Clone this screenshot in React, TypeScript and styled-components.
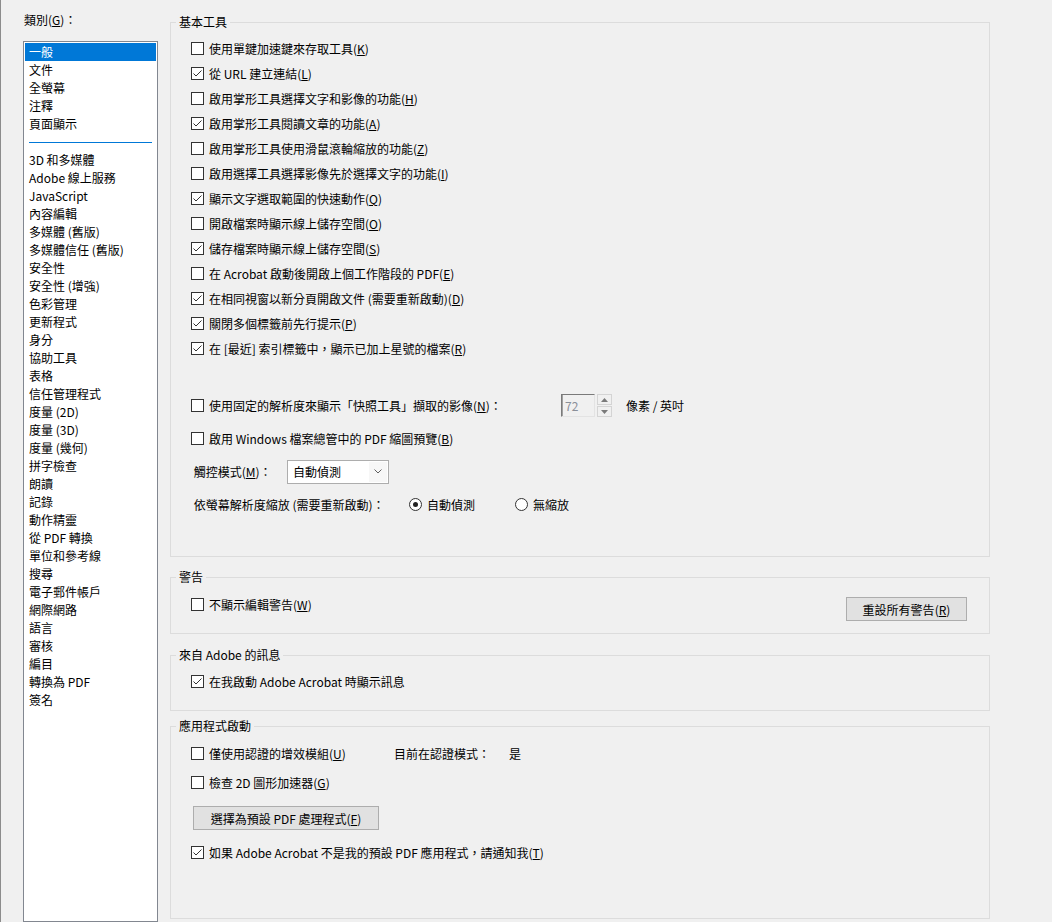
import { FC, ReactNode } from 'react';
import styled, { createGlobalStyle } from 'styled-components';

const GlobalStyle = createGlobalStyle`
  html, body {
    margin: 0;
    padding: 0;
    background: #f0f0f0;
  }
  body {
    font-family: "Noto Sans CJK TC", "Noto Sans", sans-serif;
    font-size: 12px;
    color: #000;
  }
`;

const Window = styled.div`
  display: flex;
  height: 922px;
  overflow: hidden;
  background: #f0f0f0;
  border-left: 1px solid #8c8c8c;
  box-sizing: border-box;
`;

const Sidebar = styled.div`
  display: flex;
  flex-direction: column;
  width: 169px;
  flex-shrink: 0;
  padding: 12px 0 0 22px;
  box-sizing: border-box;
`;

const SidebarLabel = styled.div`
  line-height: 16px;
  height: 16px;
  margin: 0 0 13px 1px;
`;

const CategoryList = styled.div`
  width: 135px;
  flex: 1;
  border: 1px solid #828790;
  background: #fff;
  padding: 1px;
  box-sizing: border-box;
`;

const CategoryItem = styled.div<{ $selected?: boolean }>`
  height: 18px;
  line-height: 18px;
  padding-left: 4px;
  white-space: nowrap;
  background: ${(p) => (p.$selected ? '#0078d7' : 'transparent')};
  color: ${(p) => (p.$selected ? '#fff' : '#000')};
`;

const ListDivider = styled.div`
  height: 18px;
  display: flex;
  align-items: center;
  padding: 0 4px 0 4px;
  &::after {
    content: '';
    flex: 1;
    height: 1px;
    background: #0078d7;
  }
`;

const Content = styled.div`
  width: 820px;
  display: flex;
  flex-direction: column;
`;

const Group = styled.fieldset<{ $top: number; $pad: string }>`
  margin: ${(p) => p.$top}px 0 0 0;
  padding: ${(p) => p.$pad};
  border: 1px solid #dcdcdc;
  min-inline-size: 0;
  box-sizing: border-box;
`;

const GroupTitle = styled.legend`
  line-height: 16px;
  padding: 0 3px;
  margin-left: -15px;
`;

const Row = styled.div<{ $h?: number; $mt?: number }>`
  display: flex;
  align-items: center;
  height: ${(p) => p.$h ?? 25}px;
  margin-top: ${(p) => p.$mt ?? 0}px;
  white-space: nowrap;
`;

const CheckCell = styled.div<{ $w?: number }>`
  display: flex;
  align-items: center;
  width: ${(p) => (p.$w ? `${p.$w}px` : 'auto')};
  flex-shrink: 0;
`;

const Box = styled.span`
  display: inline-flex;
  width: 13px;
  height: 13px;
  border: 1px solid #333;
  background: #fff;
  box-sizing: border-box;
  flex-shrink: 0;
`;

const CheckText = styled.span`
  margin-left: 5px;
`;

const Key = styled.u`
  text-underline-offset: 1px;
`;

const Caption = styled.span<{ $w?: number }>`
  display: inline-block;
  width: ${(p) => (p.$w ? `${p.$w}px` : 'auto')};
  flex-shrink: 0;
`;

const Mnemonic: FC<{ text: string; k: string }> = ({ text, k }) => (
  <>
    {text}(<Key>{k}</Key>)
  </>
);

const Checkbox: FC<{ checked?: boolean; children: ReactNode; width?: number }> = ({
  checked,
  children,
  width,
}) => (
  <CheckCell $w={width}>
    <Box>
      {checked && (
        <svg width="11" height="11" viewBox="0 0 11 11">
          <polyline points="1.5,5.5 4,8 9.5,2.5" fill="none" stroke="#333" strokeWidth="1" />
        </svg>
      )}
    </Box>
    <CheckText>{children}</CheckText>
  </CheckCell>
);

/* spin box for the resolution value */
const SpinField = styled.div`
  display: flex;
  align-items: center;
  gap: 2px;
`;

const SpinInput = styled.span`
  width: 34px;
  height: 23px;
  box-sizing: border-box;
  border: 1px solid;
  border-color: #7a7a7a #e3e3e3 #e3e3e3 #7a7a7a;
  box-shadow: inset 1px 0 0 #a0a0a0;
  color: #8a8f99;
  line-height: 21px;
  padding-left: 3px;
`;

const SpinButtons = styled.div`
  display: flex;
  flex-direction: column;
  width: 15px;
  height: 23px;
  gap: 1px;
`;

const SpinButton = styled.span`
  flex: 1;
  display: flex;
  align-items: center;
  justify-content: center;
  border: 1px solid #d4d4d4;
  background: #f0f0f0;
`;

const Unit = styled.span`
  margin-left: 14px;
`;

/* drop-down list */
const Combo = styled.div`
  display: flex;
  width: 102px;
  height: 24px;
  box-sizing: border-box;
  border: 1px solid #adadad;
  padding: 1px;
  background: #fff;
`;

const ComboValue = styled.span`
  flex: 1;
  line-height: 20px;
  padding-left: 4px;
`;

const ComboArrow = styled.span`
  width: 18px;
  display: flex;
  align-items: center;
  justify-content: center;
  background: #f7f7f7;
`;

const RadioOption = styled.div<{ $w: number }>`
  display: flex;
  align-items: center;
  width: ${(p) => p.$w}px;
`;

const RadioCircle = styled.span<{ $on?: boolean }>`
  width: 13px;
  height: 13px;
  box-sizing: border-box;
  border: 1px solid #333;
  border-radius: 50%;
  background: #fff;
  display: flex;
  align-items: center;
  justify-content: center;
  &::after {
    content: '';
    width: 5px;
    height: 5px;
    border-radius: 50%;
    background: ${(p) => (p.$on ? '#222' : 'transparent')};
  }
`;

const RadioText = styled.span`
  margin-left: 5px;
`;

const PushButton = styled.button<{ $w: number; $mt?: number; $ml?: number }>`
  width: ${(p) => p.$w}px;
  height: 24px;
  margin: ${(p) => p.$mt ?? 0}px 0 0 ${(p) => p.$ml ?? 0}px;
  padding: 0;
  border: 1px solid #adadad;
  background: #e1e1e1;
  font: inherit;
  color: #000;
  flex-shrink: 0;
`;

const SplitRow = styled.div`
  display: flex;
  justify-content: space-between;
  align-items: flex-start;
`;

const Arrow: FC<{ up?: boolean }> = ({ up }) => (
  <svg width="7" height="4" viewBox="0 0 7 4">
    <polygon points={up ? '0,4 7,4 3.5,0' : '0,0 7,0 3.5,4'} fill="#7a7a7a" />
  </svg>
);

const topCategories = ['一般', '文件', '全螢幕', '注釋', '頁面顯示'];
const moreCategories = [
  '3D 和多媒體',
  'Adobe 線上服務',
  'JavaScript',
  '內容編輯',
  '多媒體 (舊版)',
  '多媒體信任 (舊版)',
  '安全性',
  '安全性 (增強)',
  '色彩管理',
  '更新程式',
  '身分',
  '協助工具',
  '表格',
  '信任管理程式',
  '度量 (2D)',
  '度量 (3D)',
  '度量 (幾何)',
  '拼字檢查',
  '朗讀',
  '記錄',
  '動作精靈',
  '從 PDF 轉換',
  '單位和參考線',
  '搜尋',
  '電子郵件帳戶',
  '網際網路',
  '語言',
  '審核',
  '編目',
  '轉換為 PDF',
  '簽名',
];

const basicTools: { text: string; k: string; checked: boolean }[] = [
  { text: '使用單鍵加速鍵來存取工具', k: 'K', checked: false },
  { text: '從 URL 建立連結', k: 'L', checked: true },
  { text: '啟用掌形工具選擇文字和影像的功能', k: 'H', checked: false },
  { text: '啟用掌形工具閱讀文章的功能', k: 'A', checked: true },
  { text: '啟用掌形工具使用滑鼠滾輪縮放的功能', k: 'Z', checked: false },
  { text: '啟用選擇工具選擇影像先於選擇文字的功能', k: 'I', checked: false },
  { text: '顯示文字選取範圍的快速動作', k: 'Q', checked: true },
  { text: '開啟檔案時顯示線上儲存空間', k: 'O', checked: false },
  { text: '儲存檔案時顯示線上儲存空間', k: 'S', checked: true },
  { text: '在 Acrobat 啟動後開啟上個工作階段的 PDF', k: 'E', checked: false },
  { text: '在相同視窗以新分頁開啟文件 (需要重新啟動)', k: 'D', checked: true },
  { text: '關閉多個標籤前先行提示', k: 'P', checked: true },
  { text: '在 [最近] 索引標籤中，顯示已加上星號的檔案', k: 'R', checked: true },
];

export default function App() {
  return (
    <>
      <GlobalStyle />
      <Window>
        <Sidebar>
          <SidebarLabel>
            類別(<Key>G</Key>)：
          </SidebarLabel>
          <CategoryList>
            {topCategories.map((c, i) => (
              <CategoryItem key={c} $selected={i === 0}>
                {c}
              </CategoryItem>
            ))}
            <ListDivider />
            {moreCategories.map((c) => (
              <CategoryItem key={c}>{c}</CategoryItem>
            ))}
          </CategoryList>
        </Sidebar>

        <Content>
          <Group $top={14} $pad="6px 20px 35px">
            <GroupTitle>基本工具</GroupTitle>
            {basicTools.map((t) => (
              <Row key={t.k}>
                <Checkbox checked={t.checked}>
                  <Mnemonic text={t.text} k={t.k} />
                </Checkbox>
              </Row>
            ))}
            <Row $h={33} $mt={28}>
              <Checkbox width={370}>
                <Mnemonic text="使用固定的解析度來顯示「快照工具」擷取的影像" k="N" />：
              </Checkbox>
              <SpinField>
                <SpinInput>72</SpinInput>
                <SpinButtons>
                  <SpinButton>
                    <Arrow up />
                  </SpinButton>
                  <SpinButton>
                    <Arrow />
                  </SpinButton>
                </SpinButtons>
              </SpinField>
              <Unit>像素 / 英吋</Unit>
            </Row>
            <Row $h={33}>
              <Checkbox>
                <Mnemonic text="啟用 Windows 檔案總管中的 PDF 縮圖預覽" k="B" />
              </Checkbox>
            </Row>
            <Row $h={33}>
              <Caption $w={96}>
                &nbsp;<Mnemonic text="觸控模式" k="M" />：
              </Caption>
              <Combo>
                <ComboValue>自動偵測</ComboValue>
                <ComboArrow>
                  <svg width="8" height="5" viewBox="0 0 8 5">
                    <polyline points="0.5,0.5 4,4 7.5,0.5" fill="none" stroke="#606060" strokeWidth="1" />
                  </svg>
                </ComboArrow>
              </Combo>
            </Row>
            <Row $h={33}>
              <Caption $w={218}>&nbsp;依螢幕解析度縮放 (需要重新啟動)：</Caption>
              <RadioOption $w={106}>
                <RadioCircle $on />
                <RadioText>自動偵測</RadioText>
              </RadioOption>
              <RadioOption $w={80}>
                <RadioCircle />
                <RadioText>無縮放</RadioText>
              </RadioOption>
            </Row>
          </Group>

          <Group $top={12} $pad="7px 22px 12px 20px">
            <GroupTitle>警告</GroupTitle>
            <SplitRow>
              <Row>
                <Checkbox>
                  <Mnemonic text="不顯示編輯警告" k="W" />
                </Checkbox>
              </Row>
              <PushButton $w={121} $mt={5}>
                <Mnemonic text="重設所有警告" k="R" />
              </PushButton>
            </SplitRow>
          </Group>

          <Group $top={13} $pad="6px 20px 16px">
            <GroupTitle>來自 Adobe 的訊息</GroupTitle>
            <Row>
              <Checkbox checked>在我啟動 Adobe Acrobat 時顯示訊息</Checkbox>
            </Row>
          </Group>

          <Group $top={7} $pad="7px 20px 53px">
            <GroupTitle>應用程式啟動</GroupTitle>
            <Row>
              <Checkbox width={203}>
                <Mnemonic text="僅使用認證的增效模組" k="U" />
              </Checkbox>
              <Caption $w={115}>目前在認證模式：</Caption>
              <span>是</span>
            </Row>
            <Row $mt={4}>
              <Checkbox>
                <Mnemonic text="檢查 2D 圖形加速器" k="G" />
              </Checkbox>
            </Row>
            <PushButton $w={186} $mt={11} $ml={2}>
              <Mnemonic text="選擇為預設 PDF 處理程式" k="F" />
            </PushButton>
            <Row $mt={10}>
              <Checkbox checked>
                <Mnemonic text="如果 Adobe Acrobat 不是我的預設 PDF 應用程式，請通知我" k="T" />
              </Checkbox>
            </Row>
          </Group>
        </Content>
      </Window>
    </>
  );
}
